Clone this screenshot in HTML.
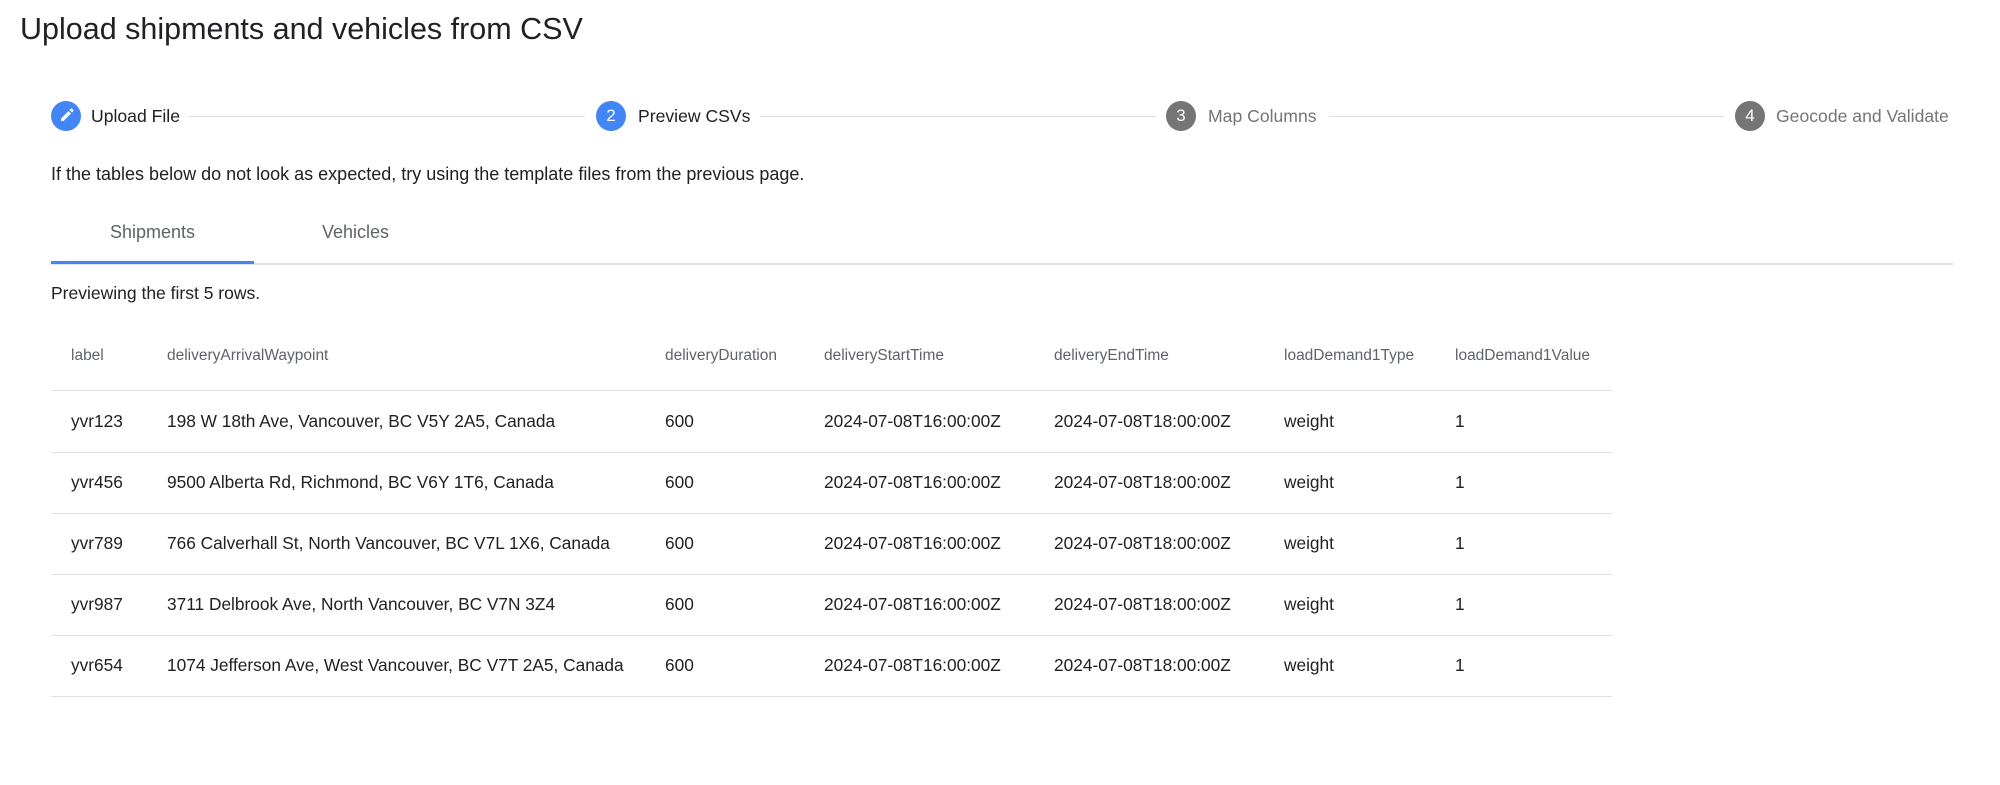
<!DOCTYPE html>
<html><head><style>
body{margin:0;width:2000px;height:785px;background:#fff;font-family:"Liberation Sans",sans-serif;color:#202124;position:relative;overflow:hidden}
.a{position:absolute;white-space:nowrap}
.c{position:absolute;width:30px;height:30px;border-radius:50%;color:#fff;font-size:17px;line-height:30px;text-align:center;top:101px}
.ln{position:absolute;height:1px;background:#dadce0;top:116px}
.sl{top:106px;font-size:17.6px}
.h{font-size:15.5px;color:#5f6368;top:347px}
.r{font-size:17.3px;color:#202124}
.b{position:absolute;left:51px;width:1561px;height:1px;background:#e0e0e0}
</style></head><body>
<div class="a" style="left:20px;top:12px;font-size:30.5px;">Upload shipments and vehicles from CSV</div>

<div class="c" style="left:51px;background:#4285f4"><svg width="30" height="30" viewBox="0 0 30 30"><path d="M10 20v-2.5l7.5-7.5 2.5 2.5-7.5 7.5z M18.5 9l1.2-1.2a1 1 0 0 1 1.4 0l1.1 1.1a1 1 0 0 1 0 1.4L21 11.5z" fill="#fff"/></svg></div>
<div class="a sl" style="left:91px">Upload File</div>
<div class="ln" style="left:189px;width:396px"></div>
<div class="c" style="left:596px;background:#4285f4">2</div>
<div class="a sl" style="left:638px">Preview CSVs</div>
<div class="ln" style="left:760px;width:396px"></div>
<div class="c" style="left:1166px;background:#757575">3</div>
<div class="a sl" style="left:1208px;color:#757575">Map Columns</div>
<div class="ln" style="left:1329px;width:395px"></div>
<div class="c" style="left:1735px;background:#757575">4</div>
<div class="a sl" style="left:1776px;color:#757575">Geocode and Validate</div>

<div class="a" style="left:51px;top:164px;font-size:18px">If the tables below do not look as expected, try using the template files from the previous page.</div>

<div class="a" style="left:51px;width:203px;text-align:center;top:222px;font-size:18px;color:#5f6368">Shipments</div>
<div class="a" style="left:254px;width:203px;text-align:center;top:222px;font-size:18px;color:#5f6368">Vehicles</div>
<div class="a" style="left:51px;top:263px;width:1902px;height:2px;background:#e0e0e0"></div>
<div class="a" style="left:51px;top:261px;width:203px;height:3px;background:#4285f4"></div>

<div class="a" style="left:51px;top:283px;font-size:17.5px">Previewing the first 5 rows.</div>

<div class="a h" style="left:71px">label</div>
<div class="a h" style="left:167px">deliveryArrivalWaypoint</div>
<div class="a h" style="left:665px">deliveryDuration</div>
<div class="a h" style="left:824px">deliveryStartTime</div>
<div class="a h" style="left:1054px">deliveryEndTime</div>
<div class="a h" style="left:1284px">loadDemand1Type</div>
<div class="a h" style="left:1455px">loadDemand1Value</div>
<div class="b" style="top:390px"></div>

<div class="a r" style="left:71px;top:411px">yvr123</div><div class="a r" style="left:167px;top:411px">198 W 18th Ave, Vancouver, BC V5Y 2A5, Canada</div><div class="a r" style="left:665px;top:411px">600</div><div class="a r" style="left:824px;top:411px">2024-07-08T16:00:00Z</div><div class="a r" style="left:1054px;top:411px">2024-07-08T18:00:00Z</div><div class="a r" style="left:1284px;top:411px">weight</div><div class="a r" style="left:1455px;top:411px">1</div>
<div class="b" style="top:452px"></div>
<div class="a r" style="left:71px;top:472px">yvr456</div><div class="a r" style="left:167px;top:472px">9500 Alberta Rd, Richmond, BC V6Y 1T6, Canada</div><div class="a r" style="left:665px;top:472px">600</div><div class="a r" style="left:824px;top:472px">2024-07-08T16:00:00Z</div><div class="a r" style="left:1054px;top:472px">2024-07-08T18:00:00Z</div><div class="a r" style="left:1284px;top:472px">weight</div><div class="a r" style="left:1455px;top:472px">1</div>
<div class="b" style="top:513px"></div>
<div class="a r" style="left:71px;top:533px">yvr789</div><div class="a r" style="left:167px;top:533px">766 Calverhall St, North Vancouver, BC V7L 1X6, Canada</div><div class="a r" style="left:665px;top:533px">600</div><div class="a r" style="left:824px;top:533px">2024-07-08T16:00:00Z</div><div class="a r" style="left:1054px;top:533px">2024-07-08T18:00:00Z</div><div class="a r" style="left:1284px;top:533px">weight</div><div class="a r" style="left:1455px;top:533px">1</div>
<div class="b" style="top:574px"></div>
<div class="a r" style="left:71px;top:594px">yvr987</div><div class="a r" style="left:167px;top:594px">3711 Delbrook Ave, North Vancouver, BC V7N 3Z4</div><div class="a r" style="left:665px;top:594px">600</div><div class="a r" style="left:824px;top:594px">2024-07-08T16:00:00Z</div><div class="a r" style="left:1054px;top:594px">2024-07-08T18:00:00Z</div><div class="a r" style="left:1284px;top:594px">weight</div><div class="a r" style="left:1455px;top:594px">1</div>
<div class="b" style="top:635px"></div>
<div class="a r" style="left:71px;top:655px">yvr654</div><div class="a r" style="left:167px;top:655px">1074 Jefferson Ave, West Vancouver, BC V7T 2A5, Canada</div><div class="a r" style="left:665px;top:655px">600</div><div class="a r" style="left:824px;top:655px">2024-07-08T16:00:00Z</div><div class="a r" style="left:1054px;top:655px">2024-07-08T18:00:00Z</div><div class="a r" style="left:1284px;top:655px">weight</div><div class="a r" style="left:1455px;top:655px">1</div>
<div class="b" style="top:696px"></div>
</body></html>
